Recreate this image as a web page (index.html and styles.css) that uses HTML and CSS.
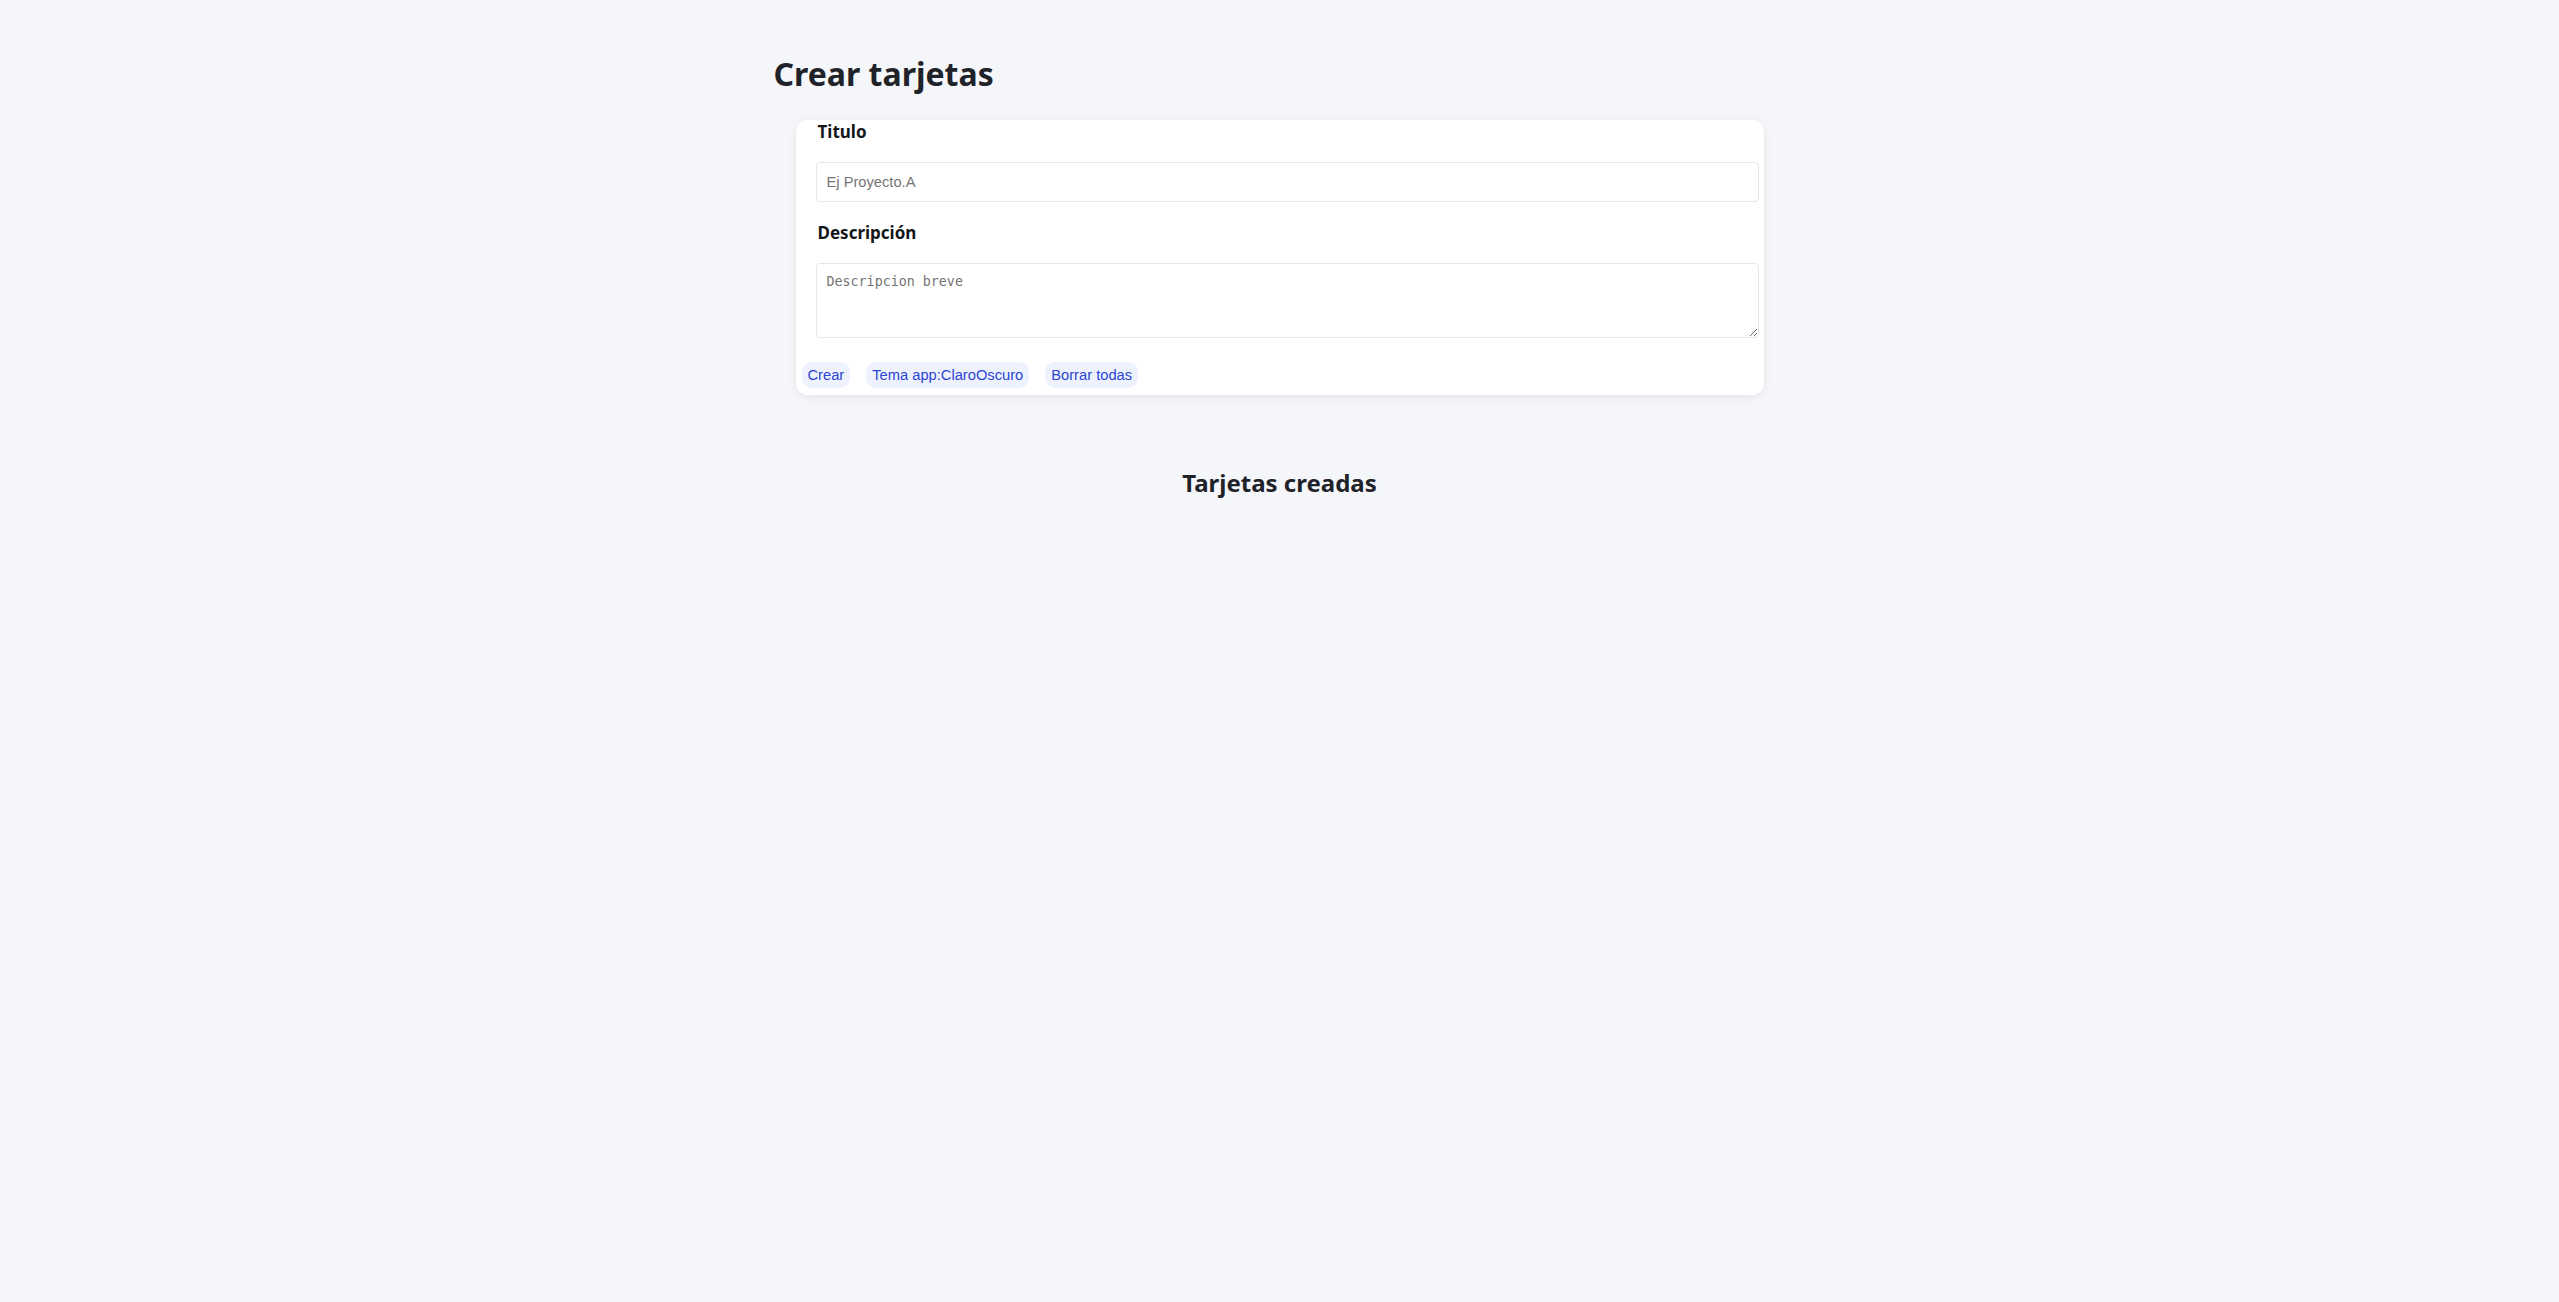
FILE: index.html
```html
<!DOCTYPE html>
<html lang="es">
<head>
  <meta charset="UTF-8">
  <title>Tarjetas</title>
  <link rel="stylesheet" href="styles.css">
</head>
<body>
  <div class="page">
    <h1>Crear tarjetas</h1>

    <!-- formulario -->
    <form class="card" onsubmit="return false">
      <div class="field">
        <label for="titulo">Titulo</label>
        <input id="titulo" type="text" placeholder="Ej Proyecto.A">
      </div>
      <div class="field">
        <label for="desc">Descripción</label>
        <textarea id="desc" placeholder="Descripcion breve"></textarea>
      </div>
      <div class="actions">
        <button type="button">Crear</button>
        <button type="button">Tema app:ClaroOscuro</button>
        <button type="button">Borrar todas</button>
      </div>
    </form>

    <!-- lista -->
    <h2>Tarjetas creadas</h2>
    <div class="list"></div>
  </div>
</body>
</html>
```

FILE: styles.css
```css
body {
  margin: 0;
  background: #f5f6fa;
  color: #1f2329;
  font-family: "Segoe UI", "Noto Sans", sans-serif;
}
.page {
  max-width: 1016px;
  margin: 0 auto;
  padding-top: 51px;
}
h1 {
  margin: 0 0 23px;
  padding-left: 2px;
  font-size: 32px;
  line-height: 46px;
}
.card {
  margin: 0 24px;
  padding: 0 5px 7px 6px;
  background: #fff;
  border-radius: 12px;
  box-shadow: 0 2px 8px rgba(0, 0, 0, 0.08);
}
.field + .field {
  margin-top: 19px;
}
.field label {
  display: block;
  padding-left: 16px;
  font-size: 17px;
  font-weight: bold;
  line-height: 24px;
  color: #14171a;
}
.field input,
.field textarea {
  display: block;
  box-sizing: border-box;
  width: calc(100% - 14px);
  margin: 18px 0 0 14px;
  border: 1px solid #e3e8ef;
  border-radius: 4px;
  background: #fff;
  outline: none;
}
.field input {
  height: 40px;
  padding: 0 10px;
  font-family: "Liberation Sans", Arial, sans-serif;
  font-size: 14.7px;
}
.field textarea {
  height: 75px;
  padding: 10px;
  font-family: "DejaVu Sans Mono", monospace;
  font-size: 13.33px;
}
.field input::placeholder,
.field textarea::placeholder {
  color: #757575;
}
.actions {
  display: flex;
  gap: 16px;
  margin-top: 24px;
}
.actions button {
  height: 26px;
  padding: 0 6px;
  border: none;
  border-radius: 10px;
  background: #eef2ff;
  color: #2b45d2;
  font-family: "Liberation Sans", Arial, sans-serif;
  font-size: 14.7px;
  cursor: pointer;
}
h2 {
  margin: 71px 0 0;
  text-align: center;
  font-size: 24px;
  line-height: 33px;
}
```
